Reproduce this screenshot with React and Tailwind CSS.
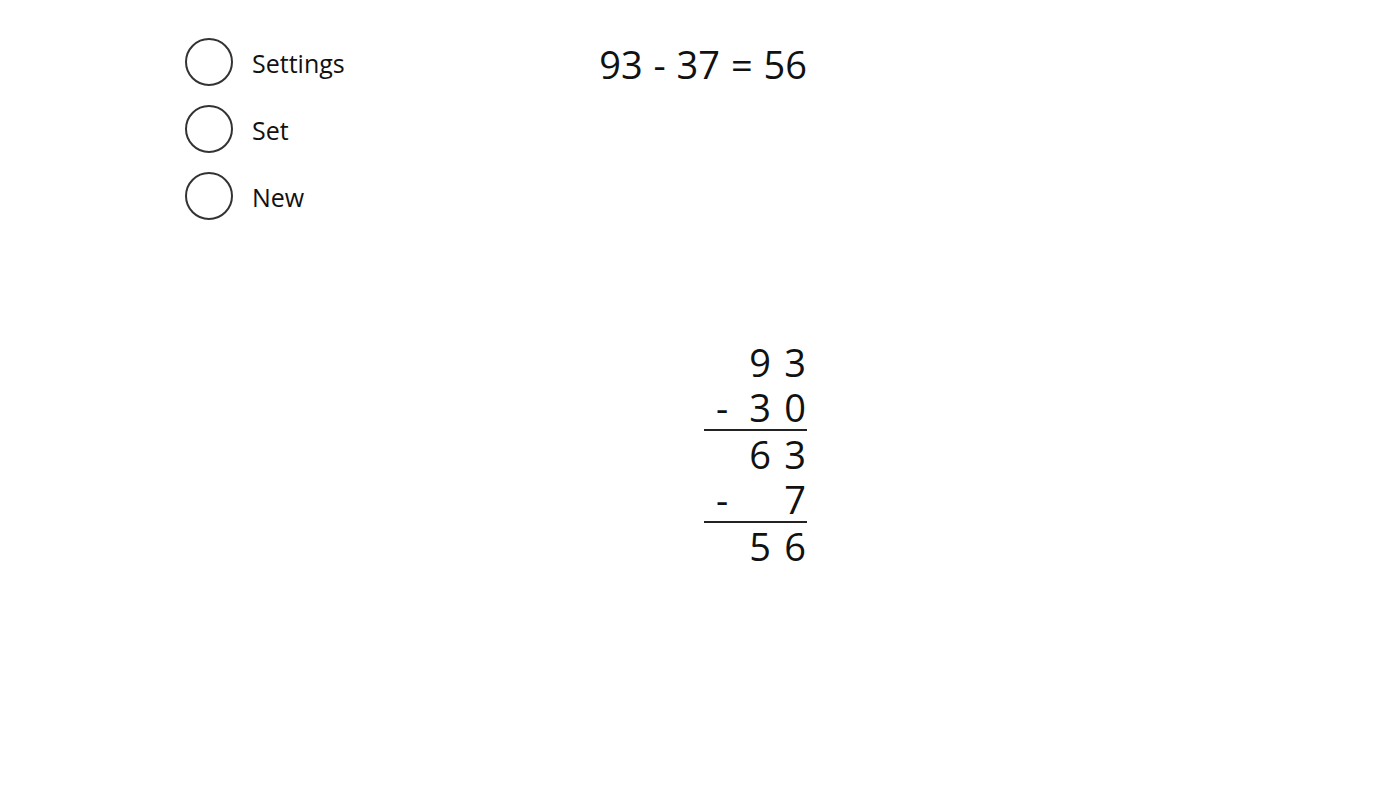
export default function App() {
  const menu = ['Settings', 'Set', 'New'];
  const rows = [
    { sign: '', tens: '9', ones: '3', line: false },
    { sign: '-', tens: '3', ones: '0', line: true },
    { sign: '', tens: '6', ones: '3', line: false },
    { sign: '-', tens: '', ones: '7', line: true },
    { sign: '', tens: '5', ones: '6', line: false },
  ];

  return (
    <div
      className="w-[1399px] h-[787px] bg-white text-[#111] flex pl-[185px] pt-[38px]"
      style={{ fontFamily: '"Open Sans", "Noto Sans", sans-serif' }}
    >
      <div className="w-[415px] flex flex-col gap-[19px]">
        {menu.map((label) => (
          <div key={label} className="flex items-center gap-[19px] h-[48px]">
            <div className="w-[48px] h-[48px] rounded-full border-2 border-[#333]" />
            <span className="text-[25px] leading-none pt-[3px]">{label}</span>
          </div>
        ))}
      </div>
      <div className="w-[207px] flex flex-col items-end">
        <p className="text-[38px] leading-none mt-[7px] whitespace-nowrap [word-spacing:1px]">93 - 37 = 56</p>
        <div className="mt-[256px] w-[103px] flex flex-col">
          {rows.map((r, i) => (
            <div
              key={i}
              className={
                r.line
                  ? 'grid grid-cols-[36px_40px_27px] h-[46px] text-[38px] leading-[44px] border-b-2 border-[#222]'
                  : 'grid grid-cols-[36px_40px_27px] h-[46px] text-[38px] leading-[46px]'
              }
            >
              <span className="text-center">{r.sign}</span>
              <span className="text-center">{r.tens}</span>
              <span className="text-right pr-[1px]">{r.ones}</span>
            </div>
          ))}
        </div>
      </div>
    </div>
  );
}
